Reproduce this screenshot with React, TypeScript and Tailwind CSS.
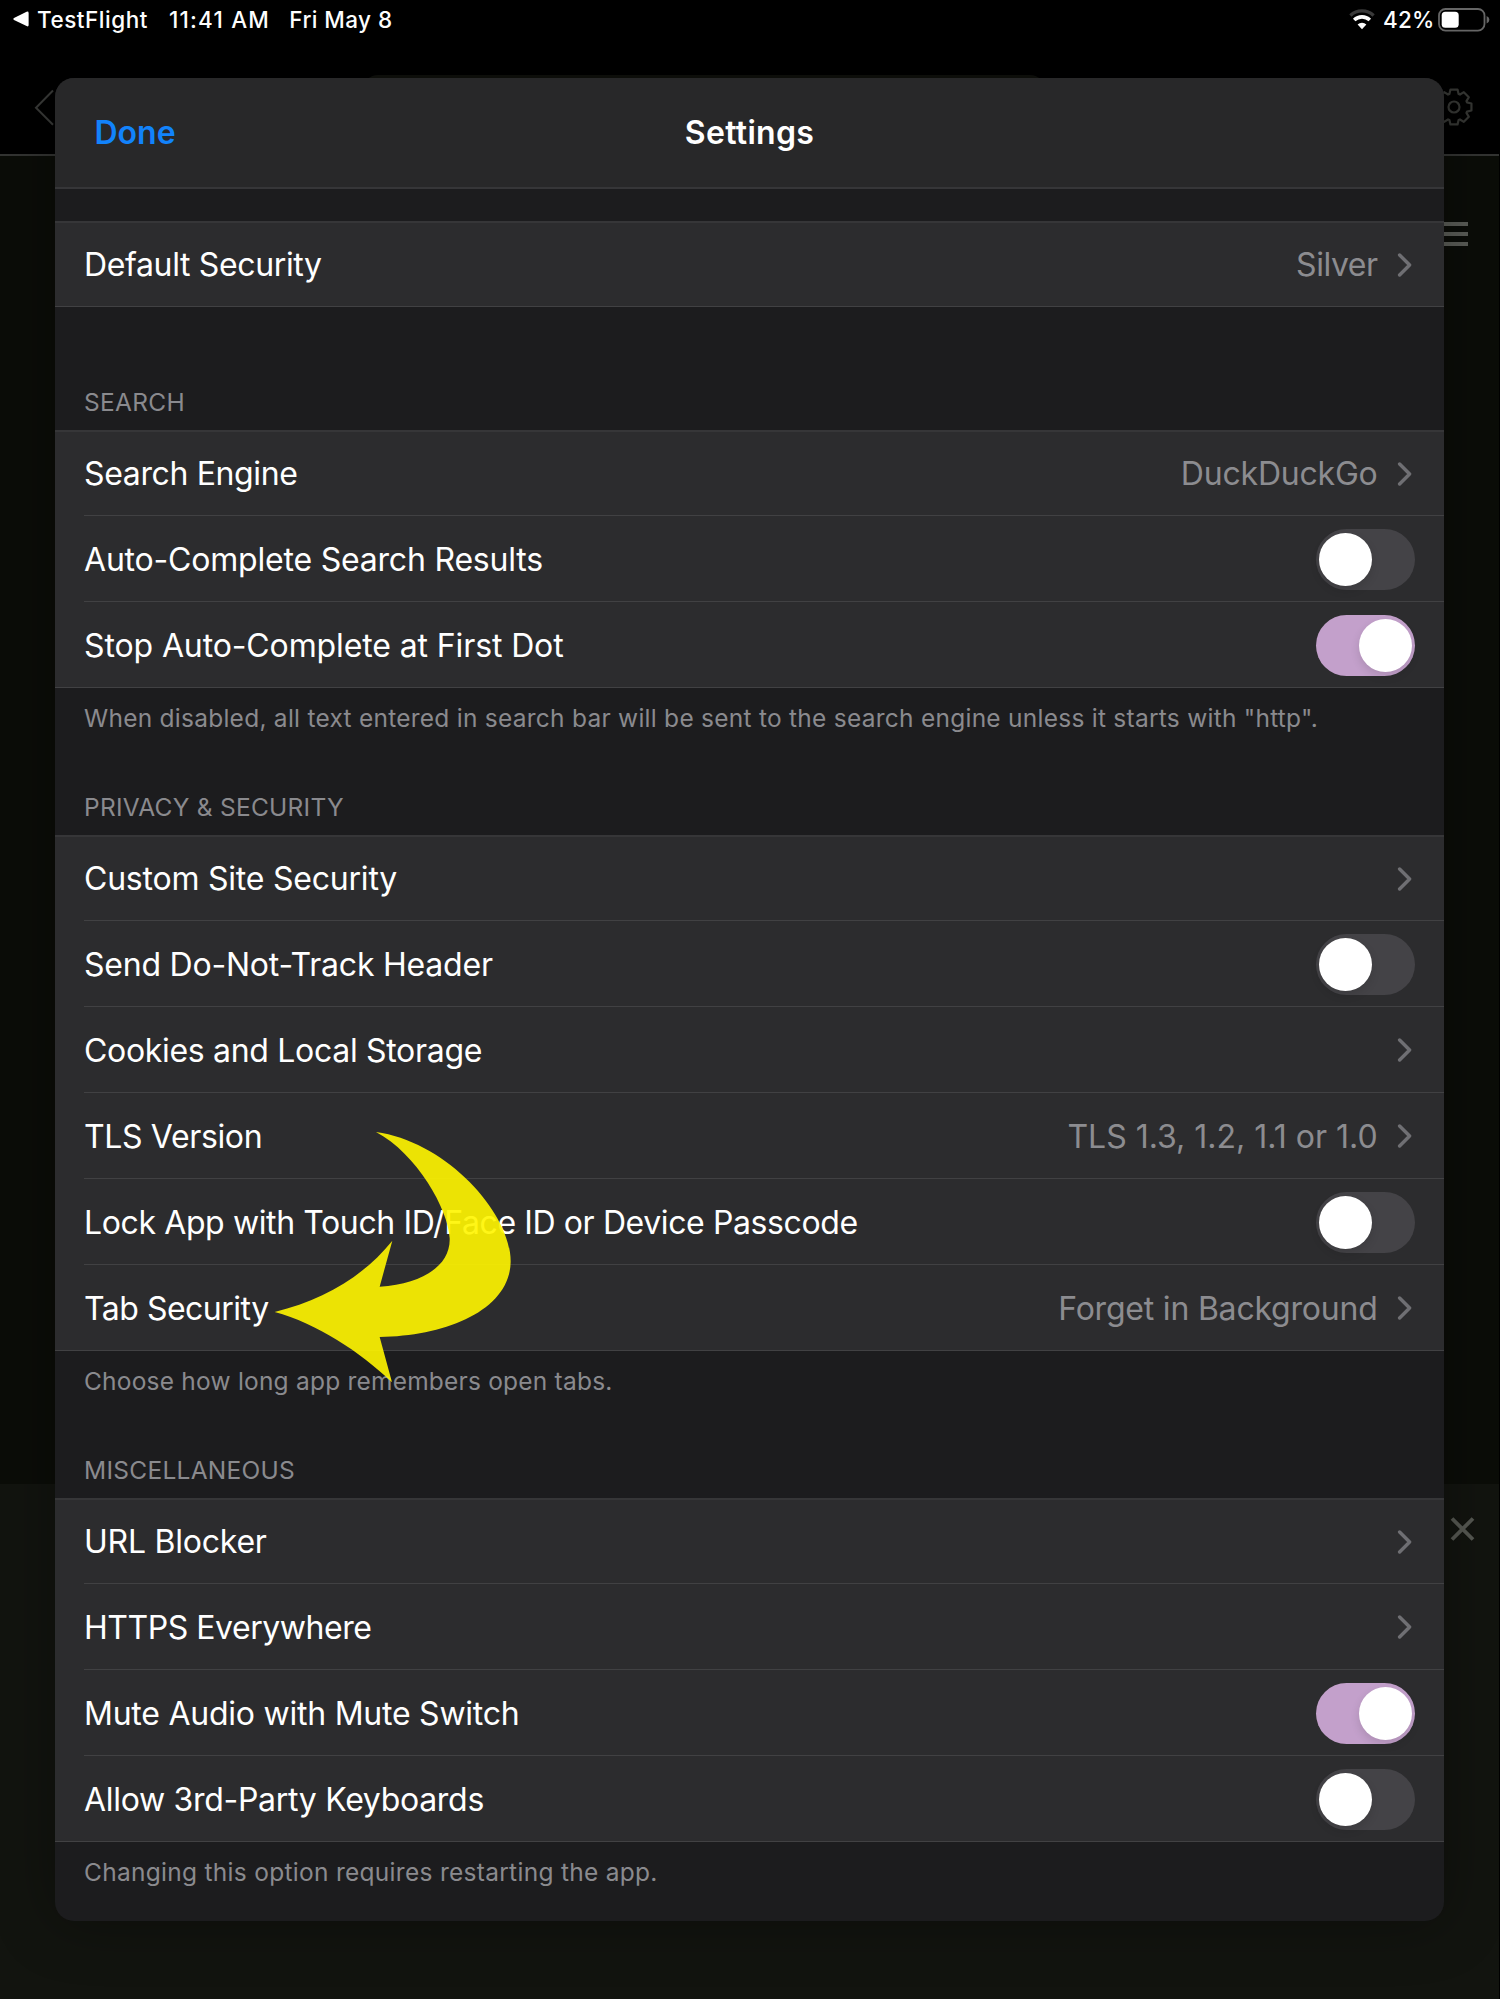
import React from "react";

type RowData = {
  label: string;
  labelTracking: string;
  value?: string;
  valueTracking?: string;
  toggle?: boolean;
};

type GroupData = {
  title?: string;
  titleTracking?: string;
  rows: RowData[];
  footer?: string;
  footerTracking?: string;
};

const groups: GroupData[] = [
  {
    rows: [
      {
        label: "Default Security",
        labelTracking: "tracking-[-0.36px]",
        value: "Silver",
        valueTracking: "tracking-[-0.45px]",
      },
    ],
  },
  {
    title: "SEARCH",
    titleTracking: "tracking-[0.297px]",
    rows: [
      {
        label: "Search Engine",
        labelTracking: "tracking-[-0.36px]",
        value: "DuckDuckGo",
        valueTracking: "tracking-[-0.2px]",
      },
      { label: "Auto-Complete Search Results", labelTracking: "tracking-[-0.2px]", toggle: false },
      { label: "Stop Auto-Complete at First Dot", labelTracking: "tracking-[-0.117px]", toggle: true },
    ],
    footer:
      'When disabled, all text entered in search bar will be sent to the search engine unless it starts with "http".',
    footerTracking: "tracking-[0.253px]",
  },
  {
    title: "PRIVACY & SECURITY",
    titleTracking: "tracking-[0.26px]",
    rows: [
      { label: "Custom Site Security", labelTracking: "tracking-[-0.22px]" },
      { label: "Send Do-Not-Track Header", labelTracking: "tracking-[-0.215px]", toggle: false },
      { label: "Cookies and Local Storage", labelTracking: "tracking-[-0.312px]" },
      {
        label: "TLS Version",
        labelTracking: "tracking-[-0.357px]",
        value: "TLS 1.3, 1.2, 1.1 or 1.0",
        valueTracking: "tracking-[0px]",
      },
      {
        label: "Lock App with Touch ID/Face ID or Device Passcode",
        labelTracking: "tracking-[-0.388px]",
        toggle: false,
      },
      {
        label: "Tab Security",
        labelTracking: "tracking-[-0.5px]",
        value: "Forget in Background",
        valueTracking: "tracking-[-0.206px]",
      },
    ],
    footer: "Choose how long app remembers open tabs.",
    footerTracking: "tracking-[0.212px]",
  },
  {
    title: "MISCELLANEOUS",
    titleTracking: "tracking-[0.27px]",
    rows: [
      { label: "URL Blocker", labelTracking: "tracking-[-0.236px]" },
      { label: "HTTPS Everywhere", labelTracking: "tracking-[-0.455px]" },
      { label: "Mute Audio with Mute Switch", labelTracking: "tracking-[-0.24px]", toggle: true },
      { label: "Allow 3rd-Party Keyboards", labelTracking: "tracking-[-0.3px]", toggle: false },
    ],
    footer: "Changing this option requires restarting the app.",
    footerTracking: "tracking-[0.284px]",
  },
];

function Toggle({ on }: { on: boolean }) {
  return (
    <span
      role="switch"
      aria-checked={on}
      className={
        "mt-px flex h-[61px] w-[99.6px] items-center rounded-full px-[3.5px] " +
        (on ? "justify-end bg-[#c3a0cb]" : "justify-start bg-[#444347]")
      }
    >
      <span className="size-[53px] rounded-full bg-white shadow-[0_4px_10px_rgba(0,0,0,0.12)]" />
    </span>
  );
}

function Chevron() {
  return (
    <svg className="mr-[2.4px] ml-[19.4px] h-6 w-4" viewBox="0 0 16 24" fill="none">
      <path
        d="M2.6 2 12.6 12 2.6 22"
        stroke="#6f6f73"
        strokeWidth="3.4"
        strokeLinecap="round"
        strokeLinejoin="round"
      />
    </svg>
  );
}

function Row({ row, first, last }: { row: RowData; first: boolean; last: boolean }) {
  const nudge = first ? "pt-0 " : "pt-0.5 ";
  return (
    <div
      className={
        (first ? "h-[84px] " : "h-[86px] ") +
        (last ? "pl-[29px] " : "ml-[29px] ") +
        "flex items-center border-b border-[#414143] pr-[28.6px]"
      }
    >
      <span
        className={nudge + "flex-1 whitespace-nowrap text-[32px] leading-10 text-white " + row.labelTracking}
      >
        {row.label}
      </span>
      {row.value && (
        <span
          className={nudge + "whitespace-nowrap text-[32px] leading-10 text-[#8c8c90] " + row.valueTracking}
        >
          {row.value}
        </span>
      )}
      {row.toggle === undefined ? <Chevron /> : <Toggle on={row.toggle} />}
    </div>
  );
}

function Group({ group, className }: { group: GroupData; className: string }) {
  return (
    <section className={className}>
      {group.title && (
        <h2
          className={
            "mb-[13px] pt-px pl-[29px] text-[24.5px] leading-[30px] whitespace-nowrap text-[#8a8a8e] " +
            group.titleTracking
          }
        >
          {group.title}
        </h2>
      )}
      <div className="border-t-2 border-[#363638] bg-[#2c2c2e]">
        {group.rows.map((row, i) => (
          <Row key={row.label} row={row} first={i === 0} last={i === group.rows.length - 1} />
        ))}
      </div>
      {group.footer && (
        <p
          className={
            "mt-[15px] pl-[29px] text-[24.5px] leading-[30px] whitespace-nowrap text-[#8a8a8e] " +
            group.footerTracking
          }
        >
          {group.footer}
        </p>
      )}
    </section>
  );
}

const gearPath = (() => {
  const pts: string[] = [];
  for (let i = 0; i < 8; i++) {
    const mid = (i * Math.PI) / 4;
    const corners: [number, number][] = [
      [-0.34, 13.8],
      [-0.2, 17.8],
      [0.2, 17.8],
      [0.34, 13.8],
    ];
    for (const [a, r] of corners) {
      pts.push(`${(20 + r * Math.sin(mid + a)).toFixed(2)} ${(20 - r * Math.cos(mid + a)).toFixed(2)}`);
    }
  }
  return `M${pts.join("L")}Z`;
})();

function StatusBar() {
  return (
    <header className="flex h-[38px] items-center text-[22.5px] leading-[38px] font-medium text-white">
      <svg className="ml-[13px] h-4 w-4" viewBox="0 0 16 16" fill="#fff">
        <path d="M1 7.1 13.6.8Q15.6 0 15.6 2V14Q15.6 16 13.6 15.1L1 8.9Q-.3 8 1 7.1Z" />
      </svg>
      <span className="ml-[8px] w-[132px] pt-px whitespace-nowrap tracking-[0.52px]">TestFlight</span>
      <span className="w-[120.3px] pt-px whitespace-nowrap tracking-[1.2px]">11:41 AM</span>
      <span className="flex-1 pt-px whitespace-nowrap tracking-[0.42px]">Fri May 8</span>
      <svg className="h-[22px] w-[28px]" viewBox="0 0 28 22" fill="none">
        <path d="M2.4 7.4A17 17 0 0 1 25.6 7.4" stroke="#3a3a3a" strokeWidth="3.4" />
        <path d="M6.2 12A11.4 11.4 0 0 1 21.8 12" stroke="#fff" strokeWidth="3.6" />
        <path d="M14 21.2 9.6 16.6A6.4 6.4 0 0 1 18.4 16.6Z" fill="#fff" />
      </svg>
      <span className="ml-[7px] w-[55px] pt-px whitespace-nowrap tracking-[0.2px]">42%</span>
      <svg className="mt-px mr-[10px] h-6 w-[52px]" viewBox="0 0 52 24" fill="none">
        <rect x="1" y="1" width="45.5" height="21.6" rx="6.5" stroke="#666" strokeWidth="1.8" />
        <rect x="3.7" y="3.8" width="17" height="16" rx="3.6" fill="#fff" />
        <path d="M48.6 8Q51.4 9.2 51.4 11.8T48.6 15.6Z" fill="#666" />
      </svg>
    </header>
  );
}

export default function App() {
  return (
    <div className="relative h-[1999px] w-[1500px] overflow-hidden bg-black font-['Inter',sans-serif]">
      <div className="absolute inset-0 flex flex-col pr-px">
        <div className="h-[154px]" />
        <div className="h-[1330px] border-t-2 border-[#333432] bg-[#0b0d08]" />
        <div className="flex-1 bg-[#12140f]" />
      </div>

      <div className="absolute top-[74.5px] left-[362px] h-10 w-[684px] rounded-2xl bg-[#10110d]" />
      <svg className="absolute top-[88px] left-[32px] h-10 w-6" viewBox="0 0 24 40" fill="none">
        <path d="M21 2.5 4 19.7 21 36.8" stroke="#393a38" strokeWidth="2" />
      </svg>
      <svg className="absolute top-[87px] left-[1433.7px] size-10" viewBox="0 0 40 40" fill="none">
        <path d={gearPath} stroke="#353633" strokeWidth="2.2" strokeLinejoin="round" />
        <circle cx="20" cy="20" r="5.5" stroke="#353633" strokeWidth="2.2" />
      </svg>
      <div className="absolute top-[222px] left-[1438px] flex w-[30px] flex-col gap-[6px]">
        <span className="h-[4px] bg-[#5b5d57]" />
        <span className="h-[4px] bg-[#5b5d57]" />
        <span className="h-[4px] bg-[#5b5d57]" />
      </div>
      <svg className="absolute top-[1515.5px] left-[1448.5px] size-[27px]" viewBox="0 0 27 27" fill="none">
        <path d="M3 2.5 24 23.5M24 2.5 3 23.5" stroke="#565852" strokeWidth="3.8" />
      </svg>

      <div className="relative flex flex-col">
        <StatusBar />
        <main className="mt-10 ml-[55px] h-[1842.5px] w-[1389px] overflow-hidden rounded-[19px] bg-[#1c1c1e] shadow-[0_0_60px_rgba(0,0,0,0.35)]">
          <div className="grid h-[111px] grid-cols-[1fr_auto_1fr] items-center border-b-2 border-[#363638] bg-[#282829]">
            <span className="pt-px pl-[39.5px] text-[32px] leading-10 font-semibold tracking-[0px] text-[#1283fb]">
              Done
            </span>
            <h1 className="pt-px text-[32px] leading-10 font-semibold tracking-[0.3px] text-white">Settings</h1>
          </div>
          <Group group={groups[0]} className="mt-8" />
          <Group group={groups[1]} className="mt-[79px]" />
          <Group group={groups[2]} className="mt-[58px]" />
          <Group group={groups[3]} className="mt-[58px]" />
        </main>
      </div>

      <svg
        className="absolute top-[1080px] left-[50px] h-[320px] w-[500px]"
        viewBox="0 0 1500 960"
        fill="rgb(255,245,0)"
        fillOpacity="0.91"
      >
        <path d="M978 156C1190 185 1383 400 1382 545C1380 690 1190 768 989 771L1026 907C930 815 800 730 674 696C820 660 940 590 1027 482L989 620C1120 612 1202 555 1199 475C1196 390 1100 220 978 156Z" />
      </svg>
    </div>
  );
}
